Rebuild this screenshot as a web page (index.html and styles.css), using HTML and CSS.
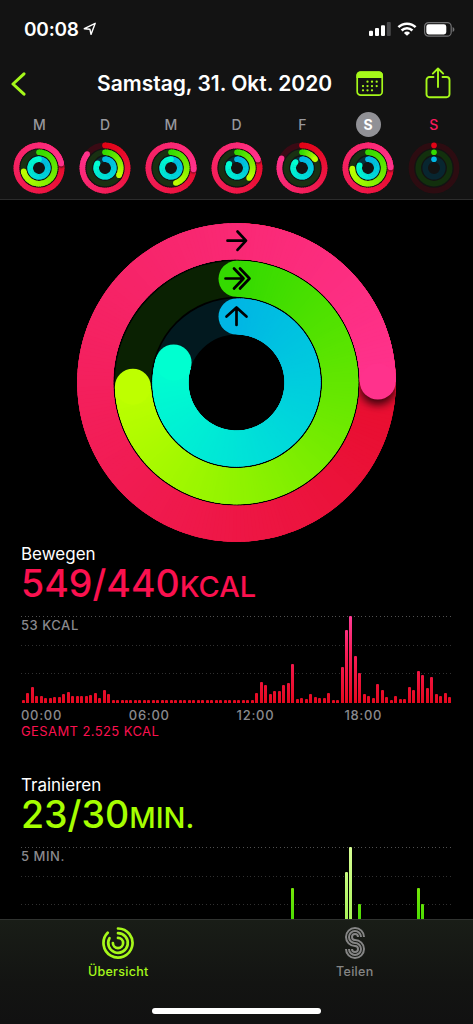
FILE: index.html
```html
<!DOCTYPE html>
<html lang="de">
<head>
    <meta charset="UTF-8">
    <meta name="viewport" content="width=device-width, initial-scale=1.0">
    <title>Aktivität</title>
    <link rel="stylesheet" href="styles.css">
</head>
<body>

    <header class="header">
        <!-- Status bar -->
        <div class="status">
            <span class="time">00:08</span>
            <svg class="location" width="14" height="14" viewBox="0 0 14 14"><path d="M1.3 6.7 12.2 1.3 8 12.4 6.9 7.2z" fill="none" stroke="#fff" stroke-width="1.4" stroke-linejoin="round"/></svg>
            <svg class="signal" width="22" height="14" viewBox="0 0 22 14" fill="#fff">
                <rect x="0" y="8.7" width="4" height="5.3" rx="1"/>
                <rect x="6" y="6" width="4" height="8" rx="1"/>
                <rect x="12" y="3.3" width="4" height="10.7" rx="1"/>
                <rect x="17.8" y="0" width="4" height="14" rx="1" fill="#48484a"/>
            </svg>
            <svg class="wifi" width="20" height="14" viewBox="0 0 20 14" fill="none" stroke="#fff" stroke-width="2.5">
                <path d="M1.4 5.2a12.3 12.3 0 0 1 17.2 0"/>
                <path d="M4.6 8.5a7.7 7.7 0 0 1 10.8 0"/>
                <path d="M10 13.8 6.9 10.9a4.4 4.4 0 0 1 6.2 0z" fill="#fff" stroke="none"/>
            </svg>
            <svg class="battery" width="31" height="15" viewBox="0 0 31 15">
                <rect x="0.6" y="0.6" width="26.6" height="13.6" rx="4" fill="none" stroke="#737375" stroke-width="1.2"/>
                <rect x="2.3" y="2.3" width="20" height="10.2" rx="2.4" fill="#fff"/>
                <path d="M28.6 5v5c1.2-.4 1.8-1.3 1.8-2.5S29.800 5.400 28.600 5z" fill="#737375"/>
            </svg>
        </div>

        <!-- Title bar -->
        <div class="nav">
            <svg class="back" width="15" height="24" viewBox="0 0 15 24"><path d="M13 1.800 2 12l11 10.200" fill="none" stroke="#a6f81a" stroke-width="3" stroke-linecap="round" stroke-linejoin="round"/></svg>
            <h1>Samstag, 31. Okt. 2020</h1>
            <svg class="calendar" width="28" height="26" viewBox="0 0 28 26">
                <rect x="1.200" y="1.200" width="25" height="23" rx="3.500" fill="none" stroke="#a6f81a" stroke-width="1.700"/>
                <path d="M.4 7V4.500A4 4 0 0 1 4.400.4H23a4 4 0 0 1 4 4.100V7z" fill="#a6f81a"/>
                <g fill="#a6f81a">
                    <circle cx="11.500" cy="10.700" r="1.150"/><circle cx="16" cy="10.700" r="1.150"/><circle cx="20.700" cy="10.700" r="1.150"/>
                    <circle cx="7" cy="15.100" r="1.150"/><circle cx="11.500" cy="15.100" r="1.150"/><circle cx="16" cy="15.100" r="1.150"/><circle cx="20.700" cy="15.100" r="1.150"/>
                    <circle cx="7" cy="19.300" r="1.150"/><circle cx="11.500" cy="19.300" r="1.150"/><circle cx="16" cy="19.300" r="1.150"/>
                </g>
            </svg>
            <svg class="share" width="26" height="32" viewBox="0 0 26 32" fill="none" stroke="#a6f81a" stroke-width="1.900" stroke-linecap="round" stroke-linejoin="round">
                <path d="M8.500 10H4.500A3 3 0 0 0 1.500 13v14.300a3 3 0 0 0 3 3h17a3 3 0 0 0 3-3V13a3 3 0 0 0-3-3h-4"/>
                <path d="M13 20V1.800M7.800 6.600 13 1.500l5.200 5.100"/>
            </svg>
        </div>

        <!-- Week rings, filled in by script.js -->
        <div class="week" id="week"></div>
    </header>

    <main class="content">
        <div class="big-ring" id="bigRing"></div>

        <section class="stat move">
            <h2>Bewegen</h2>
            <p class="value">549/440<small>KCAL</small></p>
            <div class="chart" id="moveChart"><span class="limit">53 KCAL</span></div>
            <div class="hours"><span>00:00</span><span>06:00</span><span>12:00</span><span>18:00</span></div>
            <p class="total">GESAMT 2.525 KCAL</p>
        </section>

        <section class="stat exercise">
            <h2>Trainieren</h2>
            <p class="value">23/30<small>MIN.</small></p>
            <div class="chart" id="exerciseChart"><span class="limit">5 MIN.</span></div>
        </section>
    </main>

    <footer class="footer">
        <nav class="tabs">
            <a class="tab active">
                <svg width="34" height="34" viewBox="-17 -17 34 34" fill="none" stroke="#a6f81a" stroke-width="2.700" stroke-linecap="round">
                    <path d="M0-14.500A14.500 14.500 0 1 1-10.300-10.200"/>
                    <path d="M0-9.800A9.800 9.800 0 1 1-8.500-4.900"/>
                    <path d="M0-5.100A5.100 5.100 0 1 1-5.100 0"/>
                </svg>
                <span>Übersicht</span>
            </a>
            <a class="tab">
                <svg width="34" height="34" viewBox="-6.500 -1 34 34" fill="none" stroke="#858585" stroke-width="2">
                    <path d="M19.500 10A9 9 0 1 0 10.500 19A3 3 0 1 1 7.500 22"/>
                    <path d="M16.500 10A6 6 0 1 0 10.500 16A6 6 0 1 1 4.500 22"/>
                    <path d="M13.500 10A3 3 0 1 0 10.500 13A9 9 0 1 1 1.500 22"/>
                </svg>
                <span>Teilen</span>
            </a>
        </nav>
        <div class="home"></div>
    </footer>

    <script src="script.js"></script>
</body>
</html>
```

FILE: styles.css
```css
* {
    box-sizing: border-box;
}
body {
    margin: 0;
    height: 1024px;
    display: flex;
    flex-direction: column;
    overflow: hidden;
    background: #000;
    color: #fff;
    font-family: Inter, "Liberation Sans", sans-serif;
}
h1, h2, p {
    margin: 0;
}
svg {
    display: block;
    flex: none;
}

/* Header */
.header {
    flex: none;
    height: 200px;
    background: #131313;
    border-bottom: 1px solid #2c2c2c;
}
.status {
    height: 58px;
    display: flex;
    align-items: center;
    padding: 0 18px 0 24px;
}
.time {
    font-size: 19px;
    font-weight: 600;
    letter-spacing: -0.2px;
}
.location {
    margin-left: 4px;
}
.signal {
    margin-left: auto;
}
.wifi {
    margin-left: 6px;
}
.battery {
    margin-left: 7px;
}
.nav {
    height: 50px;
    display: flex;
    align-items: center;
    padding: 0 22px 0 11px;
}
h1 {
    width: 236px;
    margin-left: 71px;
    font-size: 21px;
    font-weight: 600;
    letter-spacing: 0;
    white-space: nowrap;
}
.calendar {
    margin: 2px 0 0 23px;
}
.share {
    margin-left: auto;
}
.back {
    margin-top: 1px;
}
.week {
    display: grid;
    grid-template-columns: repeat(7, 65.75px);
    padding: 4px 0 0 6.500px;
}
.day {
    display: flex;
    flex-direction: column;
    align-items: center;
}
.day span {
    width: 25px;
    height: 25px;
    margin-bottom: 4.700px;
    line-height: 26px;
    border-radius: 50%;
    text-align: center;
    font-size: 14px;
    font-weight: 500;
    color: #98989d;
}
.day.selected span {
    background: #919196;
    color: #fff;
    font-weight: 700;
}
.day.today span {
    color: #f9195c;
}

/* Content */
.content {
    flex: 1;
    min-height: 0;
    overflow: hidden;
}
.big-ring {
    display: flex;
    justify-content: center;
    padding-top: 22px;
}
.stat {
    padding: 0 21px;
}
.stat h2 {
    height: 22px;
    line-height: 22px;
    font-size: 17px;
    font-weight: 400;
    letter-spacing: 0;
}
.value {
    height: 37px;
    line-height: 37px;
    font-size: 37.500px;
    font-weight: 500;
    white-space: nowrap;
}
.value small {
    font-size: 29px;
}
.move {
    height: 231px;
}
.move .value, .move .total {
    color: #fa114f;
}
.exercise .value {
    color: #a6ff00;
}
.chart {
    width: 431px;
    height: 87px;
    margin-top: 14px;
    display: grid;
    grid-template-columns: repeat(96, 1fr);
    justify-items: center;
    align-items: end;
    position: relative;
    background-image:
        repeating-linear-gradient(90deg, #505050 0 1px, transparent 1px 3.700px),
        repeating-linear-gradient(90deg, #303030 0 1px, transparent 1px 3.700px),
        repeating-linear-gradient(90deg, #303030 0 1px, transparent 1px 3.700px);
    background-size: 100% 1px;
    background-position: 0 0, 0 29px, 0 57px;
    background-repeat: no-repeat;
}
/* label lies over the bars */
.limit {
    position: absolute;
    top: 2px;
    left: 0;
    font-size: 13px;
    line-height: 15px;
    font-weight: 500;
    letter-spacing: 0.550px;
    color: #8a8a8e;
}
.bar {
    grid-row: 1;
    width: 3px;
    border-radius: 1px 1px 0 0;
    background: linear-gradient(0deg, #e5091f, #f71d58 50px, #ff3c96 87px);
}
.exercise .bar {
    background: linear-gradient(0deg, #38d800, #7be80a 50px);
}
.exercise .bar.peak {
    background: linear-gradient(0deg, #a0f04d, #d8ff96 87px);
}
.hours {
    display: grid;
    grid-template-columns: repeat(4, 107.800px);
    margin-top: 4px;
    line-height: 17px;
    font-size: 13px;
    font-weight: 500;
    letter-spacing: 0.700px;
    color: #8a8a8e;
}
.total {
    font-size: 13px;
    line-height: 15px;
    letter-spacing: 0.400px;
}

/* Tab bar */
.footer {
    flex: none;
    height: 105px;
    border-top: 1px solid #303330;
    background: linear-gradient(#191d17, #131412 60%, #111);
}
.tabs {
    display: grid;
    grid-template-columns: 1fr 1fr;
    height: 88px;
    padding-top: 6px;
}
.tab {
    display: flex;
    flex-direction: column;
    align-items: center;
    font-size: 12.500px;
    line-height: 16px;
    font-weight: 500;
    letter-spacing: 0.300px;
    color: #858585;
}
.tab span {
    margin-top: 4px;
}
.tab.active {
    color: #a6f81a;
}
.home {
    width: 169px;
    height: 6px;
    margin: 0 auto;
    border-radius: 3px;
    background: #fff;
}
```

FILE: script.js
```js
// start / end colour and track colour of each ring, outside to inside
const RINGS = [
    { from: [226, 4, 22], to: [255, 50, 140], track: "#2b060d" },
    { from: [52, 218, 0], to: [190, 255, 0], track: "#0a2102" },
    { from: [0, 182, 228], to: [0, 255, 208], track: "#02191f" }
];

const DAYS = [
    { name: "M", goals: [1.22, 0.715, 1] },
    { name: "D", goals: [0.855, 0.325, 0.84] },
    { name: "M", goals: [1.26, 0.45, 1] },
    { name: "D", goals: [1.19, 0.36, 0.83] },
    { name: "F", goals: [0.82, 0.157, 0.87] },
    { name: "S", goals: [1.247, 0.7436, 0.8], state: "selected" },
    { name: "S", goals: [0, 0, 0], state: "today" }
];

const MOVE = [
    3, 10, 16, 7, 7, 5, 5, 6, 6, 9, 11, 7.5, 7.5, 7, 7, 8, 10, 5, 13, 9,
    ...Array(32).fill(3),
    10, 21, 18, 9, 12.5, 12.5, 18, 20, 39, 4, 5, 4.5, 9, 6, 5, 5, 10, 3, 3,
    36, 73.5, 87, 47, 30.5, 9, 7, 5, 19, 13, 6, 3.5, 7, 4, 4.5,
    16, 13.5, 32, 28.5, 15, 26.5, 9, 7.5, 10, 6
];

const EXERCISE = Array(96).fill(0);
Object.assign(EXERCISE, { 30: 15, 59: 15, 60: 46.5, 72: 62, 73: 87, 75: 30.5, 88: 46.5, 89: 30.5, 91: 15 });

function point(r, turn) {
    const a = turn * 2 * Math.PI;
    return (r * Math.sin(a)).toFixed(2) + " " + (-r * Math.cos(a)).toFixed(2);
}

function mix(ring, t) {
    return "rgb(" + ring.from.map((c, i) => Math.round(c + (ring.to[i] - c) * t)).join(",") + ")";
}

function dot(r, turn, width, fill) {
    const [x, y] = point(r, turn).split(" ");
    return `<circle cx="${x}" cy="${y}" r="${width / 2}" fill="${fill}"/>`;
}

// the sweep is built from short pieces so the colour can follow the arc
function drawRing(ring, r, width, goal, steps, track) {
    let out = `<circle r="${r}" fill="none" stroke="${track}" stroke-width="${width}"/>`;
    out += dot(r, 0, width, mix(ring, 0));
    const count = Math.ceil(goal * steps);
    const shadowAt = count - Math.ceil(steps / 8);
    for (let i = 0; i < count; i++) {
        if (goal > 1 && i === shadowAt) {
            out += `<g clip-path="url(#clip${steps})"><g filter="url(#blur${steps})">${dot(r, goal + 0.006, width, "rgba(0,0,0,.75)")}</g></g>`;
        }
        const a = goal * i / count;
        const b = Math.min(goal, goal * (i + 1) / count + 0.01);
        out += `<path d="M${point(r, a)}A${r} ${r} 0 0 1 ${point(r, b)}" fill="none" stroke="${mix(ring, (i + 0.5) / count)}" stroke-width="${width}"/>`;
    }
    if (goal > 0) out += dot(r, goal, width, mix(ring, 1));
    return out;
}

function ringDefs(steps, r, width, blur) {
    const o = r + width / 2, n = r - width / 2;
    return `<defs><clipPath id="clip${steps}"><path clip-rule="evenodd" d="M0 ${-o}A${o} ${o} 0 1 1 0 ${o}A${o} ${o} 0 1 1 0 ${-o}M0 ${-n}A${n} ${n} 0 1 1 0 ${n}A${n} ${n} 0 1 1 0 ${-n}"/></clipPath>
        <filter id="blur${steps}" x="-50%" y="-50%" width="200%" height="200%"><feGaussianBlur stdDeviation="${blur}"/></filter></defs>`;
}

// Week row
document.getElementById("week").innerHTML = DAYS.map(day => {
    const tracks = day.state === "today" ? ["#2d0c11", "#12300d", "#082630"] : ["#3a0a14", "#193012", "#08303a"];
    const rings = RINGS.map((ring, i) =>
        drawRing(ring, [22.6, 15.7, 8.8][i], 5.6, day.goals[i], 60, tracks[i])).join("");
    return `<div class="day ${day.state || ""}"><span>${day.name}</span>
        <svg width="52" height="52" viewBox="-26 -26 52 52">${ringDefs(60, 22.6, 5.6, 0.8)}${rings}</svg></div>`;
}).join("");

// Big ring with the arrow glyphs
const goals = [1.249, 0.7436, 0.799];
document.getElementById("bigRing").innerHTML = `<svg width="321" height="321" viewBox="-160.5 -160.5 321 321">
    ${ringDefs(240, 141.3, 36, 4)}
    ${RINGS.map((ring, i) => drawRing(ring, [141.3, 103.7, 66][i], 36, goals[i], 240, ring.track)).join("")}
    <g fill="none" stroke="#000" stroke-width="2.7" stroke-linecap="round" stroke-linejoin="round">
        <path d="M-9-141.800H9M1-151l8.500 9.200L1-132.600"/>
        <path d="M-11-104H7M-2.500-114 7-104-2.500-94M3.500-114 13-104 3.500-94"/>
        <path d="M0-57.500V-75M-10-66 0-75 10-66"/>
    </g>
</svg>`;

function drawBars(id, values) {
    document.getElementById(id).insertAdjacentHTML("beforeend", values.map((h, i) =>
        `<div class="bar${h > 60 ? " peak" : ""}" style="grid-column:${i + 1};height:${h}px"></div>`).join(""));
}
drawBars("moveChart", MOVE);
drawBars("exerciseChart", EXERCISE);
```
